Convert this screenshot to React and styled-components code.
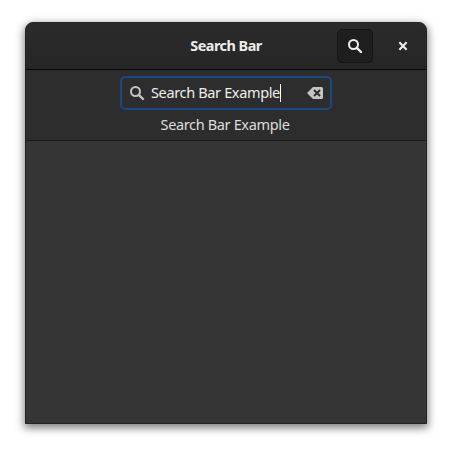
import React from "react";
import styled, { createGlobalStyle } from "styled-components";

const GlobalStyle = createGlobalStyle`
  * { box-sizing: border-box; }
  body {
    margin: 0;
    background: #fff;
    font-family: "Noto Sans", "Open Sans", sans-serif;
  }
`;

const Desktop = styled.main`
  width: 452px;
  height: 452px;
  padding: 22px 25px 28px;
  overflow: hidden;
`;

const Window = styled.section`
  display: flex;
  flex-direction: column;
  height: 402px;
  border: 1px solid #232323;
  border-radius: 8px 8px 0 0;
  background: #353535;
  box-shadow: 0 3px 9px 1px rgba(0, 0, 0, 0.5);
  overflow: hidden;
`;

const HeaderBar = styled.header`
  display: grid;
  grid-template-columns: 1fr auto 1fr;
  align-items: center;
  height: 47px;
  flex: none;
  border-bottom: 1px solid #070707;
  background: linear-gradient(to top, #262626, #2b2b2b);
`;

const Title = styled.h1`
  grid-column: 2;
  margin: 0;
  font-size: 14.4px;
  line-height: 20px;
  font-weight: 700;
  letter-spacing: -0.5px;
  color: #eeeeec;
`;

const HeaderActions = styled.div`
  display: flex;
  justify-content: flex-end;
  gap: 12px;
  padding-right: 5px;
`;

const HeaderButton = styled.button`
  display: grid;
  place-items: center;
  width: 36px;
  height: 34px;
  padding: 0;
  border: 1px solid ${(p) => (p.$active ? "#151515" : "transparent")};
  border-radius: 5px;
  background: ${(p) => (p.$active ? "#1e1e1e" : "transparent")};
  color: #eeeeec;
`;

const SearchBar = styled.div`
  display: flex;
  flex-direction: column;
  align-items: center;
  height: 71px;
  flex: none;
  padding-top: 6px;
  border-bottom: 1px solid #1b1b1b;
  background: #2d2d2d;
`;

const Entry = styled.div`
  display: flex;
  align-items: center;
  width: 212px;
  height: 34px;
  padding: 0 7px;
  border: 2px solid #184781;
  border-radius: 5px;
  background: #2d2d2d;
  color: #c4c4c2;
`;

const Label = styled.span`
  padding-bottom: 2px;
  font-size: 14.5px;
  line-height: 20px;
  letter-spacing: -0.35px;
  white-space: nowrap;
  color: ${(p) => p.$color || "#eeeeec"};
`;

const EntryText = styled.div`
  display: flex;
  align-items: center;
  flex: 1;
  margin-left: 6px;
`;

const Caret = styled.i`
  width: 1px;
  height: 18px;
  background: #fff;
`;

const Result = styled.div`
  display: flex;
  height: 22px;
  margin-top: 4px;
  padding-right: 2px;
`;

const SearchIcon = () => (
  <svg width="16" height="16" viewBox="0 0 16 16" fill="none" stroke="currentColor">
    <circle cx="6.5" cy="6.5" r="4.5" strokeWidth="2" />
    <path d="M9.8 9.8 14 14" strokeWidth="2.4" strokeLinecap="round" />
  </svg>
);

const CloseIcon = () => (
  <svg width="16" height="16" viewBox="0 0 16 16" fill="none" stroke="currentColor">
    <path d="m5.100 5.100 5.800 5.800m0-5.800-5.800 5.800" strokeWidth="2.1" strokeLinecap="square" />
  </svg>
);

const ClearIcon = () => (
  <svg width="16" height="16" viewBox="0 0 16 16">
    <path
      d="M6 2h8.5A1.5 1.5 0 0 1 16 3.500v9a1.500 1.500 0 0 1-1.500 1.500H6L0 8Z"
      fill="currentColor"
    />
    <path d="m7.700 5.700 4.600 4.600m0-4.600-4.600 4.600" stroke="#2d2d2d" strokeWidth="2" strokeLinecap="square" />
  </svg>
);

export default function App() {
  return (
    <>
      <GlobalStyle />
      <Desktop>
        <Window>
          <HeaderBar>
            <Title>Search Bar</Title>
            <HeaderActions>
              <HeaderButton $active aria-label="Search"><SearchIcon /></HeaderButton>
              <HeaderButton aria-label="Close"><CloseIcon /></HeaderButton>
            </HeaderActions>
          </HeaderBar>
          <SearchBar>
            <Entry>
              <SearchIcon />
              <EntryText>
                <Label>Search Bar Example</Label>
                <Caret />
              </EntryText>
              <ClearIcon />
            </Entry>
            <Result><Label $color="#deddda">Search Bar Example</Label></Result>
          </SearchBar>
        </Window>
      </Desktop>
    </>
  );
}
